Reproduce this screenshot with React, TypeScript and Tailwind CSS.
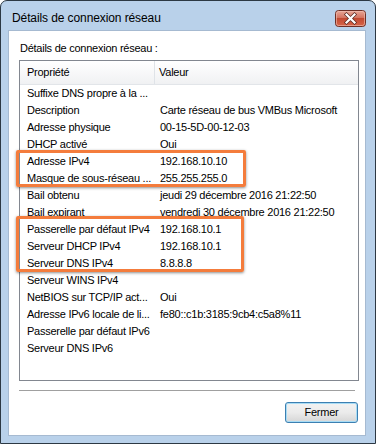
import React from "react";

const rows: [string, string][] = [
  ["Suffixe DNS propre à la ...", ""],
  ["Description", "Carte réseau de bus VMBus Microsoft"],
  ["Adresse physique", "00-15-5D-00-12-03"],
  ["DHCP activé", "Oui"],
  ["Adresse IPv4", "192.168.10.10"],
  ["Masque de sous-réseau ...", "255.255.255.0"],
  ["Bail obtenu", "jeudi 29 décembre 2016 21:22:50"],
  ["Bail expirant", "vendredi 30 décembre 2016 21:22:50"],
  ["Passerelle par défaut IPv4", "192.168.10.1"],
  ["Serveur DHCP IPv4", "192.168.10.1"],
  ["Serveur DNS IPv4", "8.8.8.8"],
  ["Serveur WINS IPv4", ""],
  ["NetBIOS sur TCP/IP act...", "Oui"],
  ["Adresse IPv6 locale de li...", "fe80::c1b:3185:9cb4:c5a8%11"],
  ["Passerelle par défaut IPv6", ""],
  ["Serveur DNS IPv6", ""],
];

function CloseButton() {
  return (
    <svg width="31" height="17" viewBox="0 0 31 17">
      <defs>
        <linearGradient id="cbg" x1="0" y1="0" x2="0" y2="1">
          <stop offset="0" stopColor="#e9a99a" />
          <stop offset="0.45" stopColor="#d47461" />
          <stop offset="0.5" stopColor="#c24a32" />
          <stop offset="1" stopColor="#d8664a" />
        </linearGradient>
      </defs>
      <rect x="0.5" y="0.5" width="30" height="16" rx="3" fill="url(#cbg)" stroke="#6e2f25" />
      <rect x="1.5" y="1.5" width="28" height="14" rx="2" fill="none" stroke="#f2c2b6" strokeOpacity="0.6" />
      <path d="M11.5 4.5 L19.5 12.5 M19.5 4.5 L11.5 12.5" stroke="#5a2a22" strokeWidth="3.6" strokeLinecap="square" />
      <path d="M11.5 4.5 L19.5 12.5 M19.5 4.5 L11.5 12.5" stroke="#ffffff" strokeWidth="2.2" strokeLinecap="square" />
    </svg>
  );
}

export default function App() {
  return (
    <div className="relative w-[376px] h-[444px] bg-white" style={{ fontFamily: '"Liberation Sans", Arial, sans-serif' }}>
      <div className="w-[376px] h-[444px] rounded-t-[7px] border border-[#2c3843] bg-[#b9d1ea] flex flex-col">
        <div className="h-[29px] flex items-start justify-between pl-[11px] pr-[9px]">
          <div className="mt-[10px] text-[12px] leading-[14px] tracking-[-0.1px] text-black">Détails de connexion réseau</div>
          <div className="mt-[9px]">
            <CloseButton />
          </div>
        </div>
        <div className="flex pl-[7px]">
          <div className="w-[358px] h-[406px] bg-white border border-[#a6bad1] flex flex-col text-[11px] leading-[13px] tracking-[-0.25px] text-black">
            <div className="ml-[11px] mt-[11px] h-[13px]">Détails de connexion réseau :</div>
            <div className="ml-[10px] mt-[5px] w-[340px] h-[321px] border border-[#828790] bg-white flex flex-col">
              <div className="h-[24px] flex bg-gradient-to-b from-white to-[#f0f1f3] border-b border-[#e2e5e9]">
                <div className="w-[135px] border-r border-[#dfe3e8] pl-[7px] flex items-center">Propriété</div>
                <div className="flex-1 pl-[4px] flex items-center">Valeur</div>
              </div>
              {rows.map(([k, v], i) => (
                <div key={i} className="h-[17px] flex items-center">
                  <div className="w-[135px] shrink-0 pl-[7px] whitespace-nowrap">{k}</div>
                  <div className="flex-1 pl-[5px] whitespace-nowrap">{v}</div>
                </div>
              ))}
            </div>
            <div className="ml-[10px] mt-[9px] w-[336px] h-[2px] border-t border-[#a0a0a0] border-b border-b-white" />
            <div className="ml-[276px] mt-[10px] w-[73px] h-[21px] rounded-[3px] border border-[#3c7fb1] bg-gradient-to-b from-[#f2f2f2] via-[#ebebeb] to-[#d6d6d6] shadow-[inset_0_0_0_1px_#a8dcf5] flex items-center justify-center">
              Fermer
            </div>
          </div>
        </div>
      </div>
      <div className="absolute left-[16px] top-[150px] w-[230px] h-[37px] border-[3px] border-[#f47c3c] rounded-[2px] shadow-[0_1px_3px_rgba(0,0,0,0.45)]" />
      <div className="absolute left-[16px] top-[216px] w-[228px] h-[56px] border-[3px] border-[#f47c3c] rounded-[2px] shadow-[0_1px_3px_rgba(0,0,0,0.45)]" />
    </div>
  );
}
